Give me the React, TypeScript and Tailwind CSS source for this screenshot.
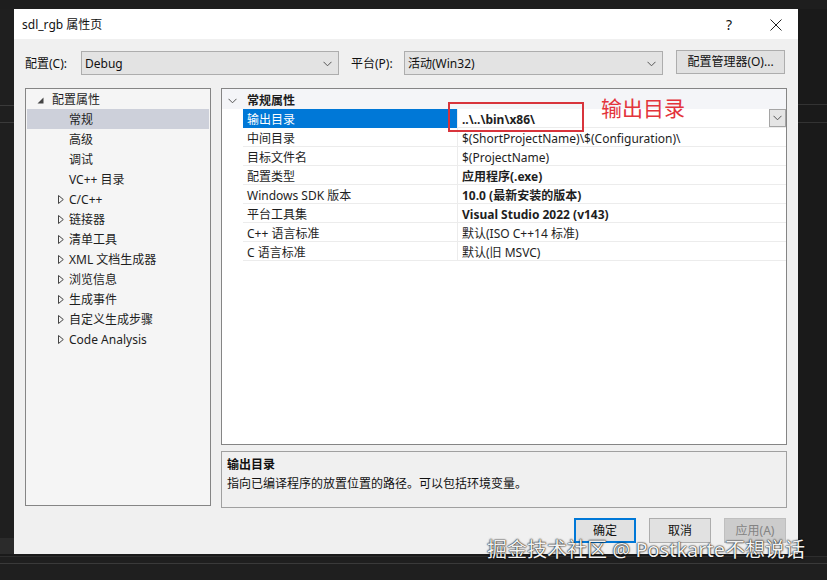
import { ReactNode } from 'react'

const font = "font-['Noto_Sans','Noto_Sans_CJK_SC',sans-serif]"

type Prop = { name: string; value: string; bold?: boolean; selected?: boolean }

const props: Prop[] = [
  { name: '输出目录', value: '..\\..\\bin\\x86\\', bold: true, selected: true },
  { name: '中间目录', value: '$(ShortProjectName)\\$(Configuration)\\' },
  { name: '目标文件名', value: '$(ProjectName)' },
  { name: '配置类型', value: '应用程序(.exe)', bold: true },
  { name: 'Windows SDK 版本', value: '10.0 (最新安装的版本)', bold: true },
  { name: '平台工具集', value: 'Visual Studio 2022 (v143)', bold: true },
  { name: 'C++ 语言标准', value: '默认(ISO C++14 标准)' },
  { name: 'C 语言标准', value: '默认(旧 MSVC)' },
]

const treeItems: { label: string; arrow?: boolean; selected?: boolean }[] = [
  { label: '常规', selected: true },
  { label: '高级' },
  { label: '调试' },
  { label: 'VC++ 目录' },
  { label: 'C/C++', arrow: true },
  { label: '链接器', arrow: true },
  { label: '清单工具', arrow: true },
  { label: 'XML 文档生成器', arrow: true },
  { label: '浏览信息', arrow: true },
  { label: '生成事件', arrow: true },
  { label: '自定义生成步骤', arrow: true },
  { label: 'Code Analysis', arrow: true },
]

function Chevron({ className = '' }: { className?: string }) {
  return (
    <svg width="9" height="6" viewBox="0 0 9 6" className={className}>
      <path d="M0.5 0.8 L4.5 4.8 L8.5 0.8" fill="none" stroke="#555" strokeWidth="1" />
    </svg>
  )
}

function Combo({ value, width }: { value: string; width: string }) {
  return (
    <div
      className={`${width} h-[24px] flex items-center justify-between pl-[3px] pr-[6px] pt-[1px] bg-[#e3e3e3] border border-[#adadad] text-[12px] text-[#111]`}
    >
      <span>{value}</span>
      <Chevron />
    </div>
  )
}

function Button({ children, primary, disabled }: { children: ReactNode; primary?: boolean; disabled?: boolean }) {
  return (
    <div
      className={
        'w-[62px] h-[25px] flex items-center justify-center text-[12px] ' +
        (primary
          ? 'bg-[#e1e1e1] border-2 border-[#0078d7] text-[#111]'
          : disabled
            ? 'bg-[#cccccc] border border-[#bfbfbf] text-[#838383]'
            : 'bg-[#e1e1e1] border border-[#adadad] text-[#111]')
      }
    >
      {children}
    </div>
  )
}

function Tree() {
  return (
    <div className="w-[186px] h-[418px] bg-[#f5f5f5] border border-[#858585] px-[1px] text-[12px] text-[#1e1e1e]">
      <div className="h-[20px] flex items-center pt-[2px]">
        <svg width="7" height="7" viewBox="0 0 7 7" className="ml-[10px] mr-[8px]">
          <path d="M6.5 0.5 L6.5 6.5 L0.5 6.5 Z" fill="#444" />
        </svg>
        <span>配置属性</span>
      </div>
      {treeItems.map((item) => (
        <div
          key={item.label}
          className={`h-[20px] flex items-center pt-[1px] ${item.selected ? 'bg-[#cdd0da]' : ''}`}
        >
          <div className="w-[42px] flex justify-end pr-[5px]">
            {item.arrow && (
              <svg width="6" height="9" viewBox="0 0 6 9">
                <path d="M0.5 0.5 L5.3 4.5 L0.5 8.5 Z" fill="none" stroke="#444" strokeWidth="1" />
              </svg>
            )}
          </div>
          <span>{item.label}</span>
        </div>
      ))}
    </div>
  )
}

function PropertyGrid() {
  return (
    <div className="relative w-[566px] h-[357px] bg-white border border-[#858585] text-[12px] text-[#1e1e1e]">
      <div className="h-[20px] flex items-center pt-[4px] bg-[#f4f5f8]">
        <Chevron className="ml-[6px] mr-[10px]" />
        <span className="font-bold">常规属性</span>
      </div>
      {props.map((p) => (
        <div key={p.name} className="h-[19px] flex">
          <div className="w-[21px]" />
          <div
            className={`w-[214px] flex items-center pl-[4px] pt-[3px] border-b ${
              p.selected ? 'bg-[#0078d7] text-white border-[#0078d7]' : 'border-[#ececec]'
            }`}
          >
            {p.name}
          </div>
          <div className="flex-1 flex items-center pl-[4px] border-l border-b border-[#ececec]">
            <span className={`pt-[3px] ${p.bold ? 'font-bold' : ''}`}>{p.value}</span>
            {p.selected && (
              <div className="ml-auto w-[17px] h-[18px] flex items-center justify-center bg-[#e5e5e5] border border-[#a5a5a5]">
                <Chevron />
              </div>
            )}
          </div>
        </div>
      ))}

      {/* annotation drawn over the grid */}
      <div className="absolute left-[226px] top-[13px] w-[136px] h-[30px] border-2 border-[#d8343c]" />
      <div className="absolute left-[379px] top-[9px] text-[21px] leading-none text-[#e3343b]">输出目录</div>
    </div>
  )
}

export default function App() {
  return (
    <div className={`relative w-[827px] h-[580px] overflow-hidden bg-[#1e1e1e] flex flex-col ${font}`}>
      <div className="h-[9px] bg-[#1e1e1e]" />
      <div className="h-[545px] flex">
        {/* left edge of the editor behind */}
        <div className="w-[14px] flex flex-col bg-[#1f1f1f]">
          <div className="h-[96px]" />
          <div className="h-[1px] bg-[#3a3a3a]" />
          <div className="h-[16px]" />
          <div className="h-[1px] bg-[#3a3a3a]" />
          <div className="flex-1" />
          <div className="h-[16px] bg-[#2b2b2b]" />
        </div>

        {/* dialog */}
        <div className="w-[784px] flex flex-col">
          <div className="h-[30px] bg-white flex items-center pl-[8px] pt-[1px] text-[12px] text-[#111]">
            <span>sdl_rgb 属性页</span>
            <div className="ml-auto flex items-center">
              <div className="w-[50px] flex justify-center text-[14px]">?</div>
              <div className="w-[44px] flex justify-center">
                <svg width="12" height="12" viewBox="0 0 12 12">
                  <path d="M0.5 0.5 L11.5 11.5 M11.5 0.5 L0.5 11.5" stroke="#222" strokeWidth="1" />
                </svg>
              </div>
            </div>
          </div>

          <div className="flex-1 bg-[#f0f0f0] px-[11px] pt-[12px] text-[#111]">
            <div className="h-[24px] flex items-center text-[12px]">
              <span className="w-[56px] pt-[1px]">配置(C):</span>
              <Combo value="Debug" width="w-[258px]" />
              <span className="w-[53px] ml-[12px] pt-[1px]">平台(P):</span>
              <Combo value="活动(Win32)" width="w-[259px]" />
              <div className="ml-[13px] -mt-[2px] w-[109px] h-[24px] flex items-center justify-center bg-[#e1e1e1] border border-[#adadad]">
                配置管理器(O)...
              </div>
            </div>

            <div className="mt-[13px] flex gap-[10px] items-start">
              <Tree />
              <div className="flex flex-col">
                <PropertyGrid />
                <div className="mt-[6px] h-[57px] border border-[#a0a0a0] pl-[5px] pt-[3px] text-[12px] leading-[19px]">
                  <div className="font-bold">输出目录</div>
                  <div>指向已编译程序的放置位置的路径。可以包括环境变量。</div>
                </div>
              </div>
            </div>

            <div className="mt-[10px] flex justify-end gap-[13px] pr-[1px]">
              <Button primary>确定</Button>
              <Button>取消</Button>
              <Button disabled>应用(A)</Button>
            </div>
          </div>
        </div>

        {/* right edge of the editor behind */}
        <div className="flex-1 flex flex-col bg-[#1a1a1a]">
          <div className="h-[95px]" />
          <div className="h-[1px] bg-[#333]" />
          <div className="h-[17px]" />
          <div className="h-[1px] bg-[#333]" />
        </div>
      </div>

      <div className="flex-1 flex flex-col bg-[#1f1f1f]">
        <div className="h-[2px] bg-[#1a1a1a]" />
        <div className="h-[1px] bg-[#2e2e2e]" />
        <div className="h-[6px]" />
        <div className="h-[1px] bg-[#3a3a3a]" />
      </div>

      {/* site watermark */}
      <div className="absolute left-[487px] top-[537px] text-[20px] leading-[26px] text-[#f2f2f2] whitespace-nowrap [text-shadow:0_0_2px_#000,0_0_1px_#000]">
        掘金技术社区 @ Postkarte不想说话
      </div>
    </div>
  )
}
